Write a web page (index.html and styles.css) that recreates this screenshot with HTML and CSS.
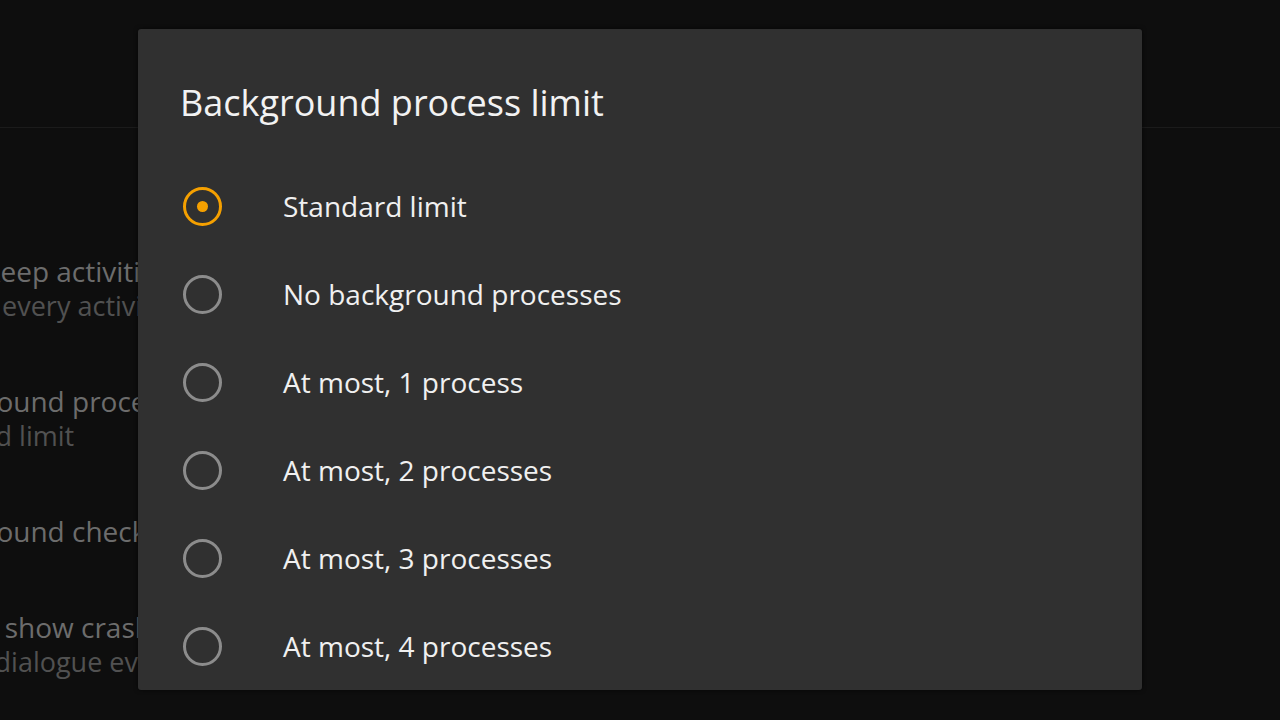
FILE: index.html
```html
<!DOCTYPE html>
<html lang="en">
<head>
<meta charset="utf-8">
<title>Background process limit</title>
<link rel="stylesheet" href="styles.css">
</head>
<body>
<div class="screen">
  <header class="topbar"></header>
  <ul class="settings">
    <li class="setting">
      <div class="setting-title">Don't keep activities</div>
      <div class="setting-sub">Destroy every activity as soon as the user leaves it</div>
    </li>
    <li class="setting">
      <div class="setting-title">Background process limit</div>
      <div class="setting-sub">Standard limit</div>
    </li>
    <li class="setting">
      <div class="setting-title">Background check</div>
    </li>
    <li class="setting">
      <div class="setting-title">Always show crash dialogue</div>
      <div class="setting-sub">Show a dialogue every time an app crashes</div>
    </li>
  </ul>

  <div class="dialog" role="dialog" aria-label="Background process limit">
    <h1 class="dialog-title">Background process limit</h1>
    <ul class="options">
      <li class="option checked"><span class="radio"></span><span class="label">Standard limit</span></li>
      <li class="option"><span class="radio"></span><span class="label">No background processes</span></li>
      <li class="option"><span class="radio"></span><span class="label">At most, 1 process</span></li>
      <li class="option"><span class="radio"></span><span class="label">At most, 2 processes</span></li>
      <li class="option"><span class="radio"></span><span class="label">At most, 3 processes</span></li>
      <li class="option"><span class="radio"></span><span class="label">At most, 4 processes</span></li>
    </ul>
  </div>
</div>
</body>
</html>
```

FILE: styles.css
```css
* { box-sizing: border-box; }

html, body {
  margin: 0;
  padding: 0;
  background: #0e0e0e;
}

body {
  font-family: "Open Sans", "Noto Sans", sans-serif;
  width: 1280px;
  height: 720px;
  overflow: hidden;
}

.screen {
  position: relative;
  width: 1280px;
  height: 720px;
  overflow: hidden;
}

.topbar {
  height: 128px;
  border-bottom: 1px solid #1b1b1b;
}

.settings {
  list-style: none;
  margin: 0;
  padding: 95px 0 0 0;
  margin-left: -92px;
}

.setting {
  padding: 30px 0;
  white-space: nowrap;
}

.setting-title {
  font-size: 28px;
  line-height: 36px;
  color: #6c6c6c;
}

.setting-sub {
  font-size: 27px;
  line-height: 34px;
  margin-left: -11px;
  color: #515151;
}

.dialog {
  position: absolute;
  left: 138px;
  top: 29px;
  width: 1004px;
  height: 661px;
  background: #303030;
  border-radius: 3px;
  padding: 52px 0 0 42px;
  overflow: hidden;
  box-shadow: 0 0 4px rgba(0, 0, 0, 0.6);
}

.dialog-title {
  margin: 0 0 37px 0;
  font-size: 36px;
  line-height: 44px;
  font-weight: 400;
  color: #f2f2f2;
}

.options {
  list-style: none;
  margin: 0;
  padding: 0;
}

.option {
  height: 88px;
  display: flex;
  align-items: center;
  gap: 61px;
}

.radio {
  width: 39px;
  height: 39px;
  margin-left: 3px;
  border-radius: 50%;
  border: 3px solid #8c8c8c;
  display: flex;
  align-items: center;
  justify-content: center;
  flex: none;
}

.option.checked .radio {
  border-color: #f5a000;
}

.option.checked .radio::after {
  content: "";
  width: 11px;
  height: 11px;
  border-radius: 50%;
  background: #f5a000;
}

.label {
  font-size: 28px;
  font-weight: 400;
  color: #f0f0f0;
  line-height: 36px;
}
```
